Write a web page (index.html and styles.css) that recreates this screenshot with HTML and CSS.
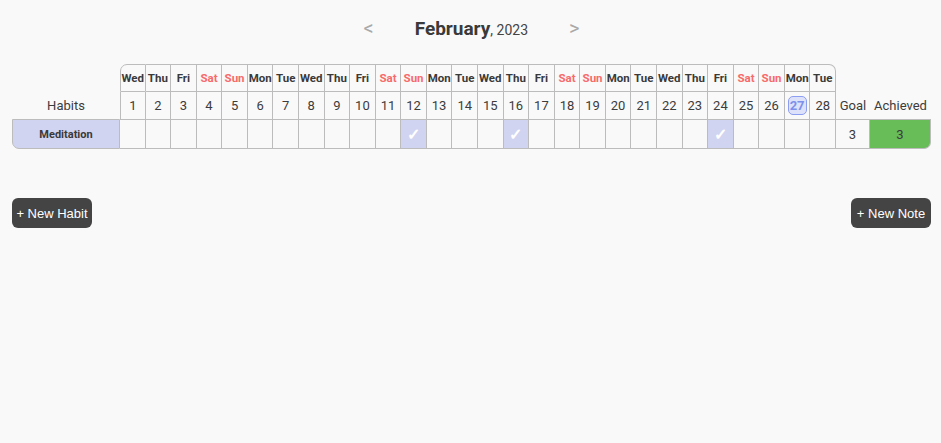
FILE: index.html
```html
<!DOCTYPE html>
<html>
<head>
<meta charset="utf-8">
<link rel="stylesheet" href="styles.css">
</head>
<body>
<div class="page">
  <header class="month-bar">
    <span class="arrow">&lt;</span>
    <h1 class="month"><b>February</b>, 2023</h1>
    <span class="arrow">&gt;</span>
  </header>

  <div class="tracker" id="tracker">
    <div class="blank"></div>
    <div class="dname first-day">Wed</div><div class="dname">Thu</div><div class="dname">Fri</div><div class="dname we">Sat</div><div class="dname we">Sun</div><div class="dname">Mon</div><div class="dname">Tue</div>
    <div class="dname">Wed</div><div class="dname">Thu</div><div class="dname">Fri</div><div class="dname we">Sat</div><div class="dname we">Sun</div><div class="dname">Mon</div><div class="dname">Tue</div>
    <div class="dname">Wed</div><div class="dname">Thu</div><div class="dname">Fri</div><div class="dname we">Sat</div><div class="dname we">Sun</div><div class="dname">Mon</div><div class="dname">Tue</div>
    <div class="dname">Wed</div><div class="dname">Thu</div><div class="dname">Fri</div><div class="dname we">Sat</div><div class="dname we">Sun</div><div class="dname">Mon</div><div class="dname last-day">Tue</div>
    <div class="blank"></div><div class="blank"></div>

    <div class="label">Habits</div>
    <div class="dnum first-day">1</div><div class="dnum">2</div><div class="dnum">3</div><div class="dnum">4</div><div class="dnum">5</div><div class="dnum">6</div><div class="dnum">7</div>
    <div class="dnum">8</div><div class="dnum">9</div><div class="dnum">10</div><div class="dnum">11</div><div class="dnum">12</div><div class="dnum">13</div><div class="dnum">14</div>
    <div class="dnum">15</div><div class="dnum">16</div><div class="dnum">17</div><div class="dnum">18</div><div class="dnum">19</div><div class="dnum">20</div><div class="dnum">21</div>
    <div class="dnum">22</div><div class="dnum">23</div><div class="dnum">24</div><div class="dnum">25</div><div class="dnum">26</div><div class="dnum"><span class="today">27</span></div><div class="dnum">28</div>
    <div class="label">Goal</div><div class="label">Achieved</div>

    <div class="habit">Meditation</div>
    <div class="cell"></div><div class="cell"></div><div class="cell"></div><div class="cell"></div><div class="cell"></div><div class="cell"></div><div class="cell"></div>
    <div class="cell"></div><div class="cell"></div><div class="cell"></div><div class="cell"></div><div class="cell done">✓</div><div class="cell"></div><div class="cell"></div>
    <div class="cell"></div><div class="cell done">✓</div><div class="cell"></div><div class="cell"></div><div class="cell"></div><div class="cell"></div><div class="cell"></div>
    <div class="cell"></div><div class="cell"></div><div class="cell done">✓</div><div class="cell"></div><div class="cell"></div><div class="cell"></div><div class="cell"></div>
    <div class="cell goal">3</div><div class="cell achieved">3</div>
  </div>

  <div class="actions">
    <button class="btn">+ New Habit</button>
    <button class="btn">+ New Note</button>
  </div>
</div>
</body>
</html>
```

FILE: styles.css
```css
* { box-sizing: border-box; }

html, body {
  margin: 0;
  background: #f9f9f9;
}

body {
  font-family: Roboto, "Noto Sans", sans-serif;
  color: #3c3c3c;
}

.page {
  padding: 0 10px 0 12px;
}

.month-bar {
  height: 56px;
  display: flex;
  align-items: center;
  justify-content: center;
  gap: 41px;
}

.arrow {
  color: #a9a9a9;
  font-size: 20px;
  line-height: 1;
  margin-top: -1px;
}

.month {
  margin: 0;
  font-size: 14px;
  font-weight: 400;
  color: #444;
}

.month b {
  font-size: 19px;
  font-weight: 700;
  color: #3a3a3a;
}

.tracker {
  margin-top: 8px;
  display: grid;
  grid-template-columns: 108px repeat(28, 1fr) 34px 61px;
  grid-template-rows: 28px 27px 30px;
  width: 919px;
}

.tracker > div {
  display: flex;
  align-items: center;
  justify-content: center;
}

.dname {
  font-size: 11.5px;
  font-weight: 700;
  color: #3a3a3a;
  border-top: 1px solid #bcbcbc;
  border-bottom: 1px solid #bcbcbc;
  border-right: 1px solid #bcbcbc;
  white-space: nowrap;
}

.dname.we { color: #f76b6b; }

.dname.first-day {
  border-left: 1px solid #bcbcbc;
  border-top-left-radius: 7px;
}

.dname.last-day { border-top-right-radius: 7px; }

.dnum {
  font-size: 13px;
  color: #3c3c3c;
  border-right: 1px solid #bcbcbc;
}

.dnum.first-day { border-left: 1px solid #bcbcbc; }

.today {
  display: inline-flex;
  align-items: center;
  justify-content: center;
  width: 19px;
  height: 19px;
  border: 1px solid #8c9ef2;
  border-radius: 5px;
  background: #dde2fa;
  color: #7d90ea;
  font-weight: 700;
  font-size: 13px;
}

.label {
  font-size: 13px;
  color: #3c3c3c;
}

.habit {
  font-size: 11px;
  font-weight: 700;
  color: #3a3a3a;
  background: #d1d4f0;
  border: 1px solid #bcbcbc;
  border-bottom-left-radius: 7px;
}

.cell {
  border-top: 1px solid #bcbcbc;
  border-bottom: 1px solid #bcbcbc;
  border-right: 1px solid #bcbcbc;
  font-size: 13px;
  color: #3c3c3c;
}

.cell.done {
  background: #d1d4f0;
  color: #ffffff;
  font-size: 16px;
  font-weight: 700;
}

.cell.achieved {
  background: #68bd59;
  border-bottom-right-radius: 7px;
}

.actions {
  margin-top: 49px;
  width: 919px;
  display: flex;
  justify-content: space-between;
}

.btn {
  width: 80px;
  height: 30px;
  padding: 0;
  border: none;
  border-radius: 6px;
  background: #444444;
  color: #ffffff;
  font-family: "Liberation Sans", Arial, sans-serif;
  font-size: 13px;
  font-weight: 400;
  white-space: nowrap;
}
```
